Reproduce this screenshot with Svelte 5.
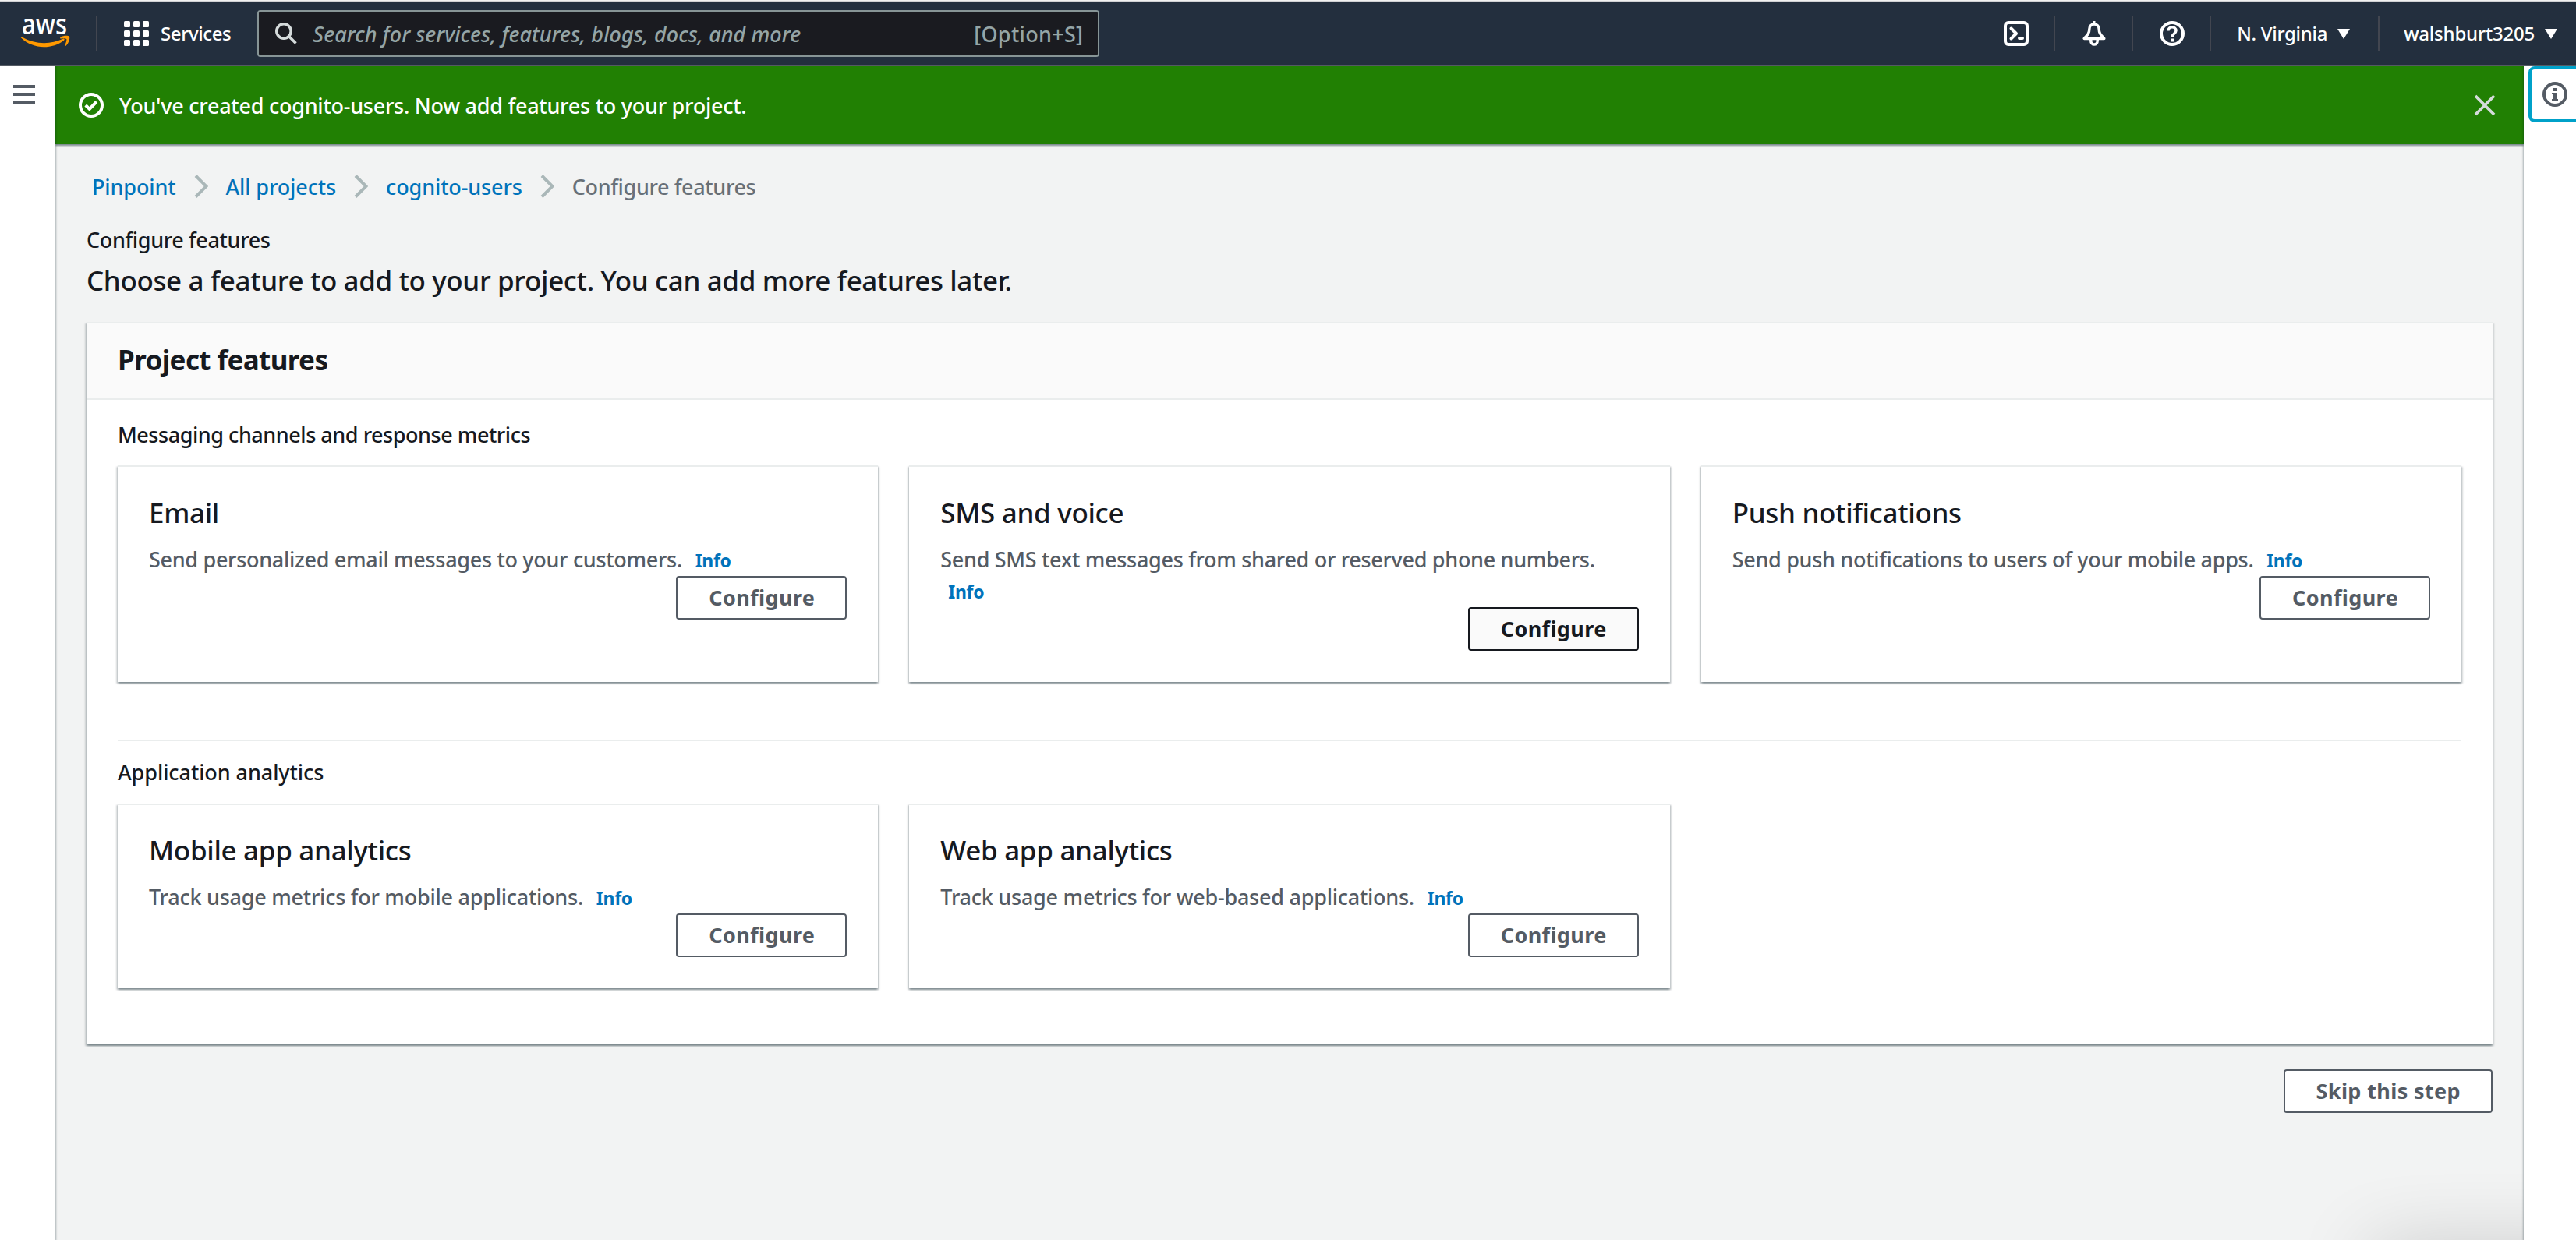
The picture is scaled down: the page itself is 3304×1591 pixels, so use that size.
<script lang="ts">
    interface Feature {
        title: string
        text: string
        hovered?: boolean
    }

    interface Section {
        name: string
        label: string
        features: Feature[]
    }

    const crumbs = ['Pinpoint', 'All projects', 'cognito-users']

    const sections: Section[] = [
        {
            name: 'channels',
            label: 'Messaging channels and response metrics',
            features: [
                { title: 'Email', text: 'Send personalized email messages to your customers.' },
                {
                    title: 'SMS and voice',
                    text: 'Send SMS text messages from shared or reserved phone numbers.',
                    hovered: true
                },
                { title: 'Push notifications', text: 'Send push notifications to users of your mobile apps.' }
            ]
        },
        {
            name: 'analytics',
            label: 'Application analytics',
            features: [
                { title: 'Mobile app analytics', text: 'Track usage metrics for mobile applications.' },
                { title: 'Web app analytics', text: 'Track usage metrics for web-based applications.' }
            ]
        }
    ]

    let showBanner = $state(true)
</script>

<div class="console">
    <header class="topnav">
        <svg class="logo" viewBox="0 -19 64 80" aria-label="AWS">
            <text x="1" y="22" textLength="58" lengthAdjust="spacingAndGlyphs">aws</text>
            <path class="smile" d="M0 26.6c-.8-1 .2-1.6 1.2-1 17 9.8 36.6 9.8 52.6 2.2 1.5-.7 2.7.8 1.3 1.9C39.8 41.5 15.6 41.8 0 26.6z" />
            <path class="smile" d="M50.8 25.5c3.3-2.2 9.6-2.3 11-.8 1.3 1.6-.2 8.3-4.2 12-.9.8-1.7.4-1.3-.6 1-2.4 2.7-7 1.9-8-.9-1.2-4.6-.9-6.9-.5-1.2.2-1.6-1.3-.5-2.1z" />
        </svg>
        <span class="divider"></span>
        <button class="nav-item services">
            <svg class="icon" viewBox="0 0 32 32">
                {#each [0, 12, 24] as y}
                    {#each [0, 12, 24] as x}
                        <rect {x} {y} width="8" height="8" rx="1.5" fill="#fff" />
                    {/each}
                {/each}
            </svg>
            <span>Services</span>
        </button>
        <div class="search">
            <svg class="search-icon" viewBox="0 0 28 28">
                <circle cx="11" cy="11" r="9.2" />
                <path d="M17.5 17.5L26.5 26.5" />
            </svg>
            <span class="placeholder">Search for services, features, blogs, docs, and more</span>
            <span class="shortcut">[Option+S]</span>
        </div>

        <div class="nav-right">
            <button class="nav-icon" aria-label="CloudShell">
                <svg class="icon line" viewBox="0 0 32 32">
                    <rect x="2" y="2" width="28" height="28" rx="4" />
                    <path d="M9.5 9.5l6.5 6.5-6.5 6.5M20 22h4" stroke-linecap="round" stroke-linejoin="round" />
                </svg>
            </button>
            <span class="divider"></span>
            <button class="nav-icon" aria-label="Notifications">
                <svg class="icon line" viewBox="0 0 32 32">
                    <path d="M16 0v4" stroke-width="3" />
                    <path d="M16 4c-4 0-6.2 2.8-6.2 6.5 0 5-2.2 7-6.6 12h25.6c-4.4-5-6.6-7-6.6-12C22.2 6.8 20 4 16 4z" stroke-width="3.5" stroke-linejoin="round" />
                    <path d="M11.8 23v2.5a4.2 4.5 0 0 0 8.4 0V23" stroke-width="3.5" />
                </svg>
            </button>
            <span class="divider"></span>
            <button class="nav-icon" aria-label="Support">
                <svg class="icon line" viewBox="0 0 32 32">
                    <circle cx="16" cy="16" r="14" />
                    <path d="M11 12.5c0-3 2.2-4.7 5-4.7s5 1.8 5 4.4c0 3.8-5 4-5 8.3" stroke-width="3.5" />
                    <path d="M16 22.5v4" />
                </svg>
            </button>
            <span class="divider"></span>
            <button class="nav-item region">
                <span>N. Virginia</span>
                <span class="caret"></span>
            </button>
            <span class="divider"></span>
            <button class="nav-item account">
                <span>walshburt3205</span>
                <span class="caret"></span>
            </button>
        </div>
    </header>

    <div class="layout">
        <aside class="rail left">
            <button class="menu" aria-label="Open navigation">
                <span></span>
                <span></span>
                <span></span>
            </button>
        </aside>

        <main>
            {#if showBanner}
                <div class="banner">
                    <svg class="icon line" viewBox="0 0 32 32">
                        <circle cx="16" cy="16" r="14" />
                        <path d="M8.8 16l5 5 9-9.5" />
                    </svg>
                    <p>You've created cognito-users. Now add features to your project.</p>
                    <button class="dismiss" aria-label="Dismiss" onclick={() => (showBanner = false)}>
                        <svg viewBox="0 0 28 28">
                            <path d="M2 2l24 24M26 2L2 26" />
                        </svg>
                    </button>
                </div>
            {/if}

            <div class="content">
                <nav class="breadcrumbs">
                    {#each crumbs as crumb}
                        <a href="#top">{crumb}</a>
                        <svg class="chevron" viewBox="0 0 18 30">
                            <path d="M2 1.5L15.5 15 2 28.5" />
                        </svg>
                    {/each}
                    <span>Configure features</span>
                </nav>

                <h1>Configure features</h1>
                <p class="lead">Choose a feature to add to your project. You can add more features later.</p>

                <section class="panel">
                    <div class="panel-header">
                        <h2>Project features</h2>
                    </div>
                    <div class="panel-body">
                        {#each sections as section, i}
                            {#if i > 0}
                                <hr />
                            {/if}
                            <div class="section {section.name}">
                                <h3>{section.label}</h3>
                                <div class="cards">
                                    {#each section.features as feature}
                                        <article class="card">
                                            <h4>{feature.title}</h4>
                                            <p>{feature.text} <a class="info" href="#info">Info</a></p>
                                            <button class="btn" class:hovered={feature.hovered}>Configure</button>
                                        </article>
                                    {/each}
                                </div>
                            </div>
                        {/each}
                    </div>
                </section>

                <div class="actions">
                    <button class="btn">Skip this step</button>
                </div>
            </div>
        </main>

        <aside class="rail right">
            <button class="help" aria-label="Open help panel">
                <svg class="icon line" viewBox="0 0 32 32">
                    <circle cx="16" cy="16" r="14" />
                    <path d="M14 8h4v4h-4zM12 14h6v8h2v2h-8v-2h2v-6h-2z" fill="#545b64" stroke="none" />
                </svg>
            </button>
        </aside>
    </div>

    <!-- feedback widget parked just below the viewport, only its shadow is visible -->
    <div class="feedback"></div>
</div>

<style>
    :global(body) {
        margin: 0;
        overflow: hidden;
    }

    .console {
        position: relative;
        display: flex;
        flex-direction: column;
        height: 1591px;
        box-sizing: border-box;
        overflow: hidden;
        border-top: 1px solid #f1f1f1;
        background: #fff;
        color: #16191f;
        font-family: "Noto Sans", "Open Sans", sans-serif;
        font-size: 27px;
        font-weight: 500;
        line-height: 40px;
        letter-spacing: -0.25px;
    }

    h1, h2, h3, h4, p {
        margin: 0;
        font-size: inherit;
        font-weight: inherit;
    }

    button {
        margin: 0;
        padding: 0;
        border: none;
        background: none;
        color: inherit;
        font: inherit;
        letter-spacing: inherit;
        cursor: pointer;
    }

    a {
        color: #0073bb;
        text-decoration: none;
    }

    .icon {
        display: block;
        width: 32px;
        height: 32px;
        flex: none;
    }

    .line {
        fill: none;
        stroke: currentColor;
        stroke-width: 4;
    }

    /* Top navigation */
    .topnav {
        display: flex;
        align-items: center;
        height: 84px;
        box-sizing: border-box;
        flex: none;
        padding-left: 27px;
        border-top: 2px solid #d0d1d3;
        border-bottom: 2px solid #545b64;
        background: #232f3e;
        color: #fff;
    }

    .logo {
        width: 64px;
        height: 80px;
        margin-right: 32px;
        overflow: visible;
    }

    .logo text {
        fill: #fff;
        font-size: 37px;
        letter-spacing: 0;
    }

    .smile {
        fill: #f90;
    }

    .divider {
        width: 2px;
        height: 44px;
        background: #424650;
    }

    .nav-item {
        display: flex;
        align-items: center;
        font-size: 24px;
        letter-spacing: -0.3px;
        white-space: nowrap;
    }

    .services {
        gap: 15px;
        margin: 0 34px;
        letter-spacing: -0.4px;
    }

    .search {
        display: flex;
        align-items: center;
        width: 1080px;
        height: 60px;
        box-sizing: border-box;
        padding: 0 19px 0 21px;
        border: 2px solid #879596;
        border-radius: 4px;
        background: #1a1b20;
        color: #95a5a6;
        letter-spacing: 0.1px;
    }

    .search-icon {
        width: 28px;
        height: 28px;
        margin-right: 20px;
        fill: none;
        stroke: #d5dbdb;
        stroke-width: 3.6;
    }

    .placeholder {
        flex: 1;
        padding-top: 1px;
        font-style: italic;
        letter-spacing: 0.05px;
    }

    .shortcut {
        padding-top: 1px;
        letter-spacing: 0.3px;
    }

    .nav-right {
        display: flex;
        align-items: center;
        margin-left: auto;
    }

    .nav-icon {
        padding: 0 32px 0 34px;
    }

    .region {
        margin: 0 36px 0 33px;
    }

    .account {
        margin: 0 24px 0 31px;
        letter-spacing: -0.2px;
    }

    .caret {
        margin-left: 13px;
        border: 8px solid transparent;
        border-top: 13px solid #fff;
        border-bottom: none;
    }

    /* Page frame */
    .layout {
        display: flex;
        flex: 1;
        min-height: 0;
    }

    .rail {
        z-index: 1;
        flex: none;
        background: #fff;
        box-shadow: 0 0 2px 1px rgba(0, 28, 36, 0.3);
        clip-path: inset(0 -4px);
    }

    .left {
        width: 71px;
    }

    .right {
        width: 67px;
    }

    .menu {
        display: flex;
        flex-direction: column;
        gap: 6px;
        margin: 24px 0 0 17px;
    }

    .menu span {
        width: 28px;
        height: 4px;
        background: #545b64;
    }

    .help {
        width: 80px;
        height: 72px;
        box-sizing: border-box;
        margin-left: 6px;
        padding-left: 14px;
        border: 4px solid #00a1c9;
        border-radius: 8px;
        color: #545b64;
    }

    main {
        flex: 1;
        min-width: 0;
        background: #f2f3f3;
    }

    .banner {
        position: relative;
        display: flex;
        align-items: center;
        height: 100px;
        box-sizing: border-box;
        padding: 0 36px 0 30px;
        background: #218003;
        color: #fff;
        box-shadow: 0 2px 2px 0 rgba(0, 28, 36, 0.5);
    }

    .banner p {
        flex: 1;
        margin-left: 20px;
        padding-top: 2px;
    }

    .dismiss svg {
        display: block;
        width: 28px;
        height: 28px;
        fill: none;
        stroke: #d5dbdb;
        stroke-width: 3.8;
    }

    .content {
        padding: 35px 40px 0;
    }

    .breadcrumbs {
        display: flex;
        align-items: center;
        height: 40px;
        margin-bottom: 28px;
        padding-left: 7px;
        color: #687078;
        letter-spacing: -0.35px;
    }

    .breadcrumbs a {
        letter-spacing: -0.12px;
    }

    .chevron {
        width: 18px;
        height: 30px;
        margin: 0 23px 2px;
        fill: none;
        stroke: #aab7b8;
        stroke-width: 4;
    }

    h1 {
        letter-spacing: -0.35px;
    }

    .lead {
        margin: 10px 0 31px;
        font-size: 35px;
        line-height: 44px;
        letter-spacing: -0.39px;
    }

    /* Containers */
    .panel,
    .card {
        border-top: 2px solid #eaeded;
        background: #fff;
        box-shadow:
            0 2px 2px 0 rgba(0, 28, 36, 0.3),
            2px 2px 2px 0 rgba(0, 28, 36, 0.15),
            -2px 2px 2px 0 rgba(0, 28, 36, 0.15);
    }

    .panel-header {
        padding: 25px 40px 27px;
        border-bottom: 2px solid #eaeded;
        background: #fafafa;
    }

    .panel-header h2 {
        font-size: 35px;
        font-weight: 700;
        line-height: 44px;
        letter-spacing: -0.6px;
    }

    .panel-body {
        padding: 25px 40px 72px;
    }

    .section h3 {
        letter-spacing: -0.46px;
    }

    .cards {
        display: grid;
        grid-template-columns: repeat(3, 1fr);
        gap: 40px;
        margin-top: 19px;
    }

    .card {
        display: flex;
        flex-direction: column;
        padding: 37px 40px 40px;
    }

    .card h4 {
        font-size: 35px;
        line-height: 44px;
        letter-spacing: -0.32px;
    }

    .card p {
        margin: 18px 0 1px;
        color: #545b64;
    }

    .channels .card p {
        letter-spacing: -0.31px;
    }

    .analytics h3 {
        letter-spacing: -0.08px;
    }

    .analytics .cards {
        margin-top: 20px;
    }

    .analytics .card {
        padding-top: 36px;
    }

    hr {
        height: 2px;
        margin: 74px 0 20px;
        border: none;
        background: #eaeded;
    }

    .info {
        display: inline-block;
        margin-left: 10px;
        font-size: 23px;
        font-weight: 700;
        line-height: 30px;
    }

    .btn {
        align-self: flex-end;
        height: 56px;
        box-sizing: border-box;
        padding: 0 39px 0 40px;
        border: 2px solid #545b64;
        border-radius: 4px;
        background: #fff;
        color: #545b64;
        font-weight: 700;
        letter-spacing: 0.38px;
    }

    .btn.hovered {
        border-color: #16191f;
        background: #fafafa;
        color: #16191f;
    }

    .actions {
        display: flex;
        justify-content: flex-end;
        margin-top: 32px;
    }

    .feedback {
        position: absolute;
        right: -40px;
        bottom: -60px;
        width: 300px;
        height: 40px;
        box-shadow: 0 0 100px rgba(0, 0, 0, 0.3);
    }
</style>
